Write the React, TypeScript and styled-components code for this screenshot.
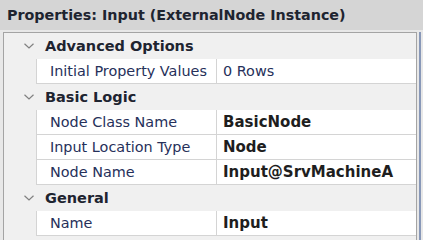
import React from "react";
import styled, { createGlobalStyle } from "styled-components";

const GlobalStyle = createGlobalStyle`
  html, body {
    margin: 0;
    padding: 0;
    background: #e8e8e8;
  }
  body {
    font-family: "DejaVu Sans", "Liberation Sans", sans-serif;
  }
`;

type Prop = { label: string; value: string; bold?: boolean };
type Group = { title: string; rows: Prop[] };

const groups: Group[] = [
  {
    title: "Advanced Options",
    rows: [{ label: "Initial Property Values", value: "0 Rows" }],
  },
  {
    title: "Basic Logic",
    rows: [
      { label: "Node Class Name", value: "BasicNode", bold: true },
      { label: "Input Location Type", value: "Node", bold: true },
      { label: "Node Name", value: "Input@SrvMachineA", bold: true },
    ],
  },
  {
    title: "General",
    rows: [{ label: "Name", value: "Input", bold: true }],
  },
];

const Window = styled.div`
  width: 423px;
  height: 240px;
  display: flex;
  flex-direction: column;
  overflow: hidden;
  background: #e8e8e8;
`;

const TitleBar = styled.div`
  flex: none;
  height: 30px;
  display: flex;
  align-items: center;
  padding-left: 7px;
  background: #d5d5d5;
  color: #1e2430;
  font-size: 14.3px;
  font-weight: bold;
  white-space: nowrap;
`;

const Body = styled.div`
  flex: 1;
  display: flex;
  padding: 2px 0 0 3px;
  min-height: 0;
`;

const Grid = styled.div`
  flex: 1;
  display: flex;
  flex-direction: column;
  border: 1px solid #a4a4a4;
  border-bottom: none;
  background: #f0f0f0;
  overflow: hidden;
`;

const Edge = styled.div`
  flex: none;
  width: 2px;
  margin: 0 2px;
  background: #8898b8;
`;

const GroupHeader = styled.div`
  flex: none;
  height: 26px;
  display: flex;
  align-items: center;
  gap: 10px;
  padding-left: 19px;
  color: #1e2430;
  font-size: 14.5px;
  font-weight: bold;
  white-space: nowrap;
`;

const Chevron = styled.svg`
  flex: none;
  width: 12px;
  height: 8px;
`;

const Row = styled.div`
  flex: none;
  height: 25px;
  display: grid;
  grid-template-columns: 32px 180px 1fr;
`;

const Cell = styled.div<{ $bold?: boolean }>`
  display: flex;
  align-items: center;
  padding-left: ${(p) => (p.$bold ? "6px" : "13px")};
  background: #ffffff;
  border-left: 1px solid #d4d4d4;
  border-bottom: 1px solid #d4d4d4;
  color: ${(p) => (p.$bold ? "#1e1e1e" : "#26305a")};
  font-size: ${(p) => (p.$bold ? "15px" : "14.4px")};
  font-weight: ${(p) => (p.$bold ? "bold" : "normal")};
  white-space: nowrap;
  overflow: hidden;
`;

const ValueCell = styled(Cell)`
  padding-left: 6px;
`;

export default function App() {
  return (
    <>
      <GlobalStyle />
      <Window>
        <TitleBar>Properties: Input (ExternalNode Instance)</TitleBar>
        <Body>
          <Grid>
            {groups.map((g) => (
              <React.Fragment key={g.title}>
                <GroupHeader>
                  <Chevron viewBox="0 0 12 8">
                    <polyline
                      points="1.5,1.8 6,6 10.5,1.8"
                      fill="none"
                      stroke="#808080"
                      strokeWidth="1.2"
                    />
                  </Chevron>
                  {g.title}
                </GroupHeader>
                {g.rows.map((r) => (
                  <Row key={r.label}>
                    <span />
                    <Cell>{r.label}</Cell>
                    <ValueCell $bold={r.bold}>{r.value}</ValueCell>
                  </Row>
                ))}
              </React.Fragment>
            ))}
          </Grid>
          <Edge />
        </Body>
      </Window>
    </>
  );
}
